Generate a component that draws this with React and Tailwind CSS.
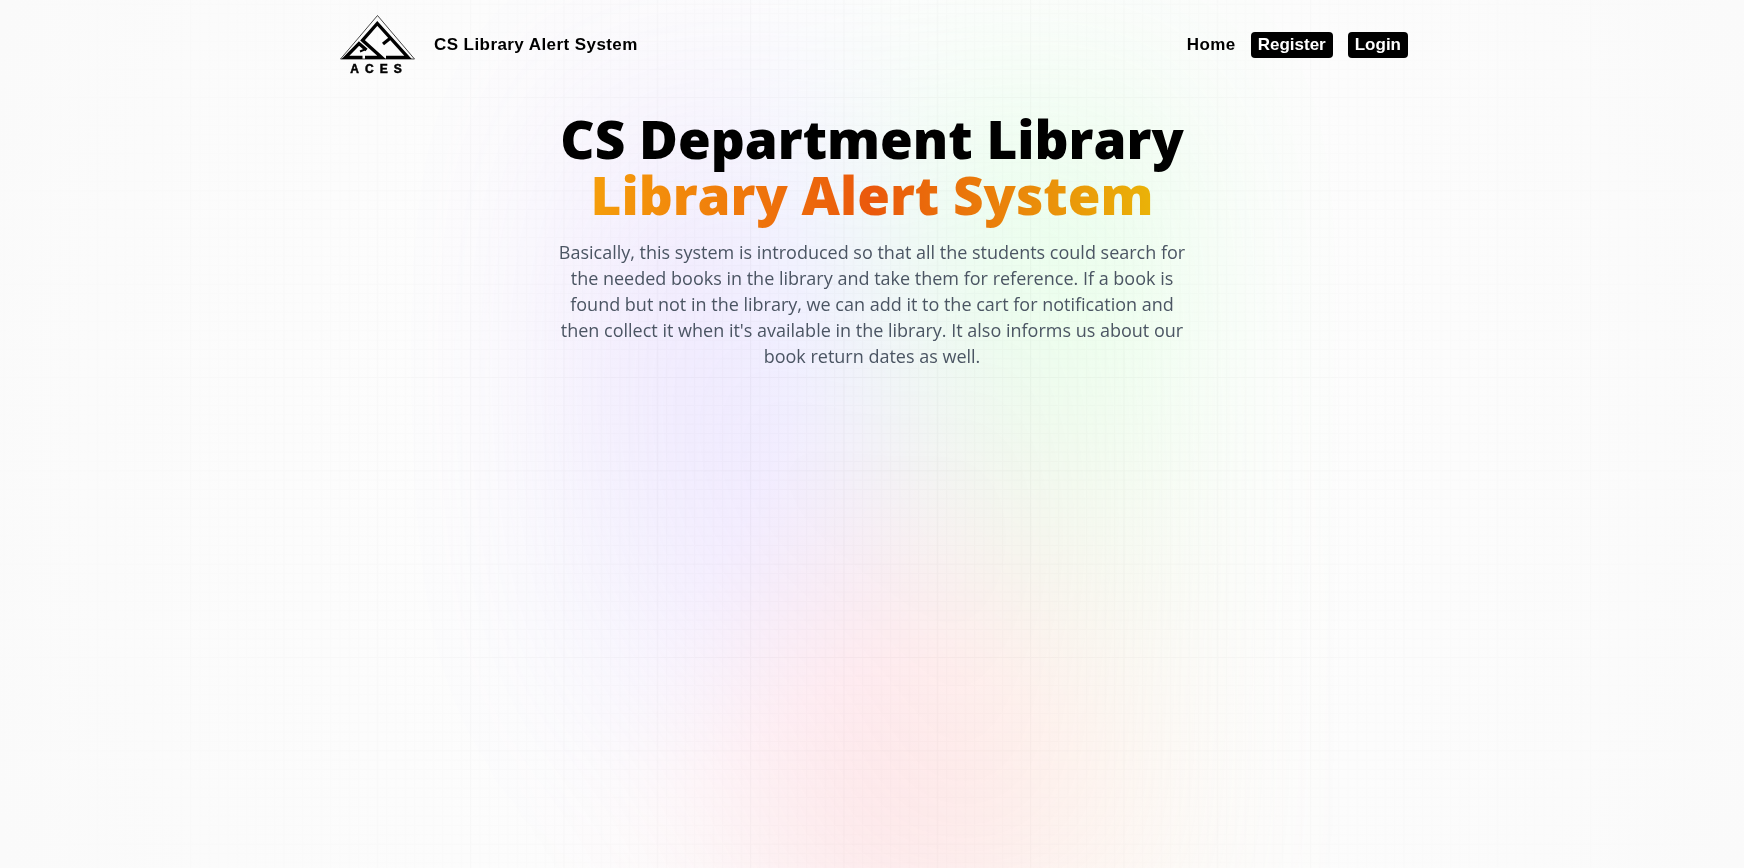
function Logo() {
  return (
    <svg viewBox="0 1 80 64" className="h-16 w-20" role="img" aria-label="ACES">
      <path d="M4.500 47 L41.500 3.500 L78.500 47 Z" fill="none" stroke="#333" strokeWidth="0.9" />
      <g fill="none" stroke="#000" strokeWidth="3.3">
        <path d="M50 45.300 H72 L41.300 11.500 L26.500 28.300 L45.500 45.300 H29" />
        <path d="M54.500 26 L47 32" />
        <path d="M26.500 45.300 H9.500 L23 31.500 L30.500 38" />
        <path d="M29 37.300 L24 39.500" strokeWidth="2" />
      </g>
      <g fill="#000" stroke="#000" strokeWidth="0.5" fontSize="12" fontWeight="700" fontFamily="Liberation Sans, sans-serif">
        <text x="40" y="61" textAnchor="middle" letterSpacing="6" dx="3">ACES</text>
      </g>
    </svg>
  );
}

function Backdrop() {
  return (
    <div className="pointer-events-none fixed inset-0 -z-10 overflow-hidden bg-white" aria-hidden="true">
      <svg className="absolute inset-0 h-full w-full">
        <defs>
          <pattern id="minor" x="3.4" y="3.7" width="9.333" height="9.333" patternUnits="userSpaceOnUse">
            <path d="M0 0.5 H9.333 M0.5 0 V9.333" stroke="#000" strokeOpacity="0.02" />
          </pattern>
          <pattern id="major" x="3.4" y="3.7" width="93.333" height="93.333" patternUnits="userSpaceOnUse">
            <path d="M0 0.5 H93.333 M0.5 0 V93.333" stroke="#000" strokeOpacity="0.02" />
          </pattern>
        </defs>
        <rect width="100%" height="100%" fill="url(#minor)" />
        <rect width="100%" height="100%" fill="url(#major)" />
      </svg>
      <div className="absolute inset-0 bg-[radial-gradient(circle,rgba(2,0,36,0)_0,#fafafa_100%)]" />
      <div className="absolute inset-x-0 top-[75px] mx-auto h-full w-full max-w-[597px] opacity-15 blur-[93px] saturate-150 bg-[radial-gradient(at_97%_21%,hsla(125,98%,72%,1)_0px,transparent_50%),radial-gradient(at_52%_99%,hsla(354,98%,61%,1)_0px,transparent_50%),radial-gradient(at_10%_29%,hsla(256,96%,67%,1)_0px,transparent_50%),radial-gradient(at_97%_96%,hsla(38,60%,74%,1)_0px,transparent_50%),radial-gradient(at_33%_50%,hsla(222,67%,73%,1)_0px,transparent_50%),radial-gradient(at_79%_53%,hsla(343,68%,79%,1)_0px,transparent_50%)]" />
    </div>
  );
}

export default function App() {
  return (
    <div className="isolate min-h-screen">
      <Backdrop />
      <div className="mx-auto max-w-[1192px] px-4 sm:px-[60px]">
        <header className="flex items-center justify-between pt-[13px] font-['Liberation_Sans',Arial,sans-serif] text-[17px] leading-[26px] font-bold text-black">
          <a href="#" className="flex items-center gap-[18px] tracking-wide">
            <Logo />
            <span>CS Library Alert System</span>
          </a>
          <nav className="flex items-center gap-[15px]">
            <a href="#home" className="tracking-wide">Home</a>
            <a href="#register" className="rounded bg-black px-[7px] text-white">Register</a>
            <a href="#login" className="rounded bg-black px-[7px] text-white">Login</a>
          </nav>
        </header>
        <main className="mx-auto flex max-w-[627px] flex-col items-center pt-[34px] text-center font-['Open_Sans',sans-serif]">
          <h1 className="text-[53px] leading-[56px] font-extrabold text-black">
            CS Department Library
            <br />
            <span className="bg-[linear-gradient(to_right,#f59e0b,#ea580c,#eab308)] bg-clip-text text-transparent">Library Alert System</span>
          </h1>
          <p className="mt-4 text-[18px] leading-[26px] text-[#4b5563]">
            Basically, this system is introduced so that all the students could search for the needed books in the library and take them for reference. If a book is found but not in the library, we can add it to the cart for notification and then collect it when it's available in the library. It also informs us about our book return dates as well.
          </p>
        </main>
      </div>
    </div>
  );
}
